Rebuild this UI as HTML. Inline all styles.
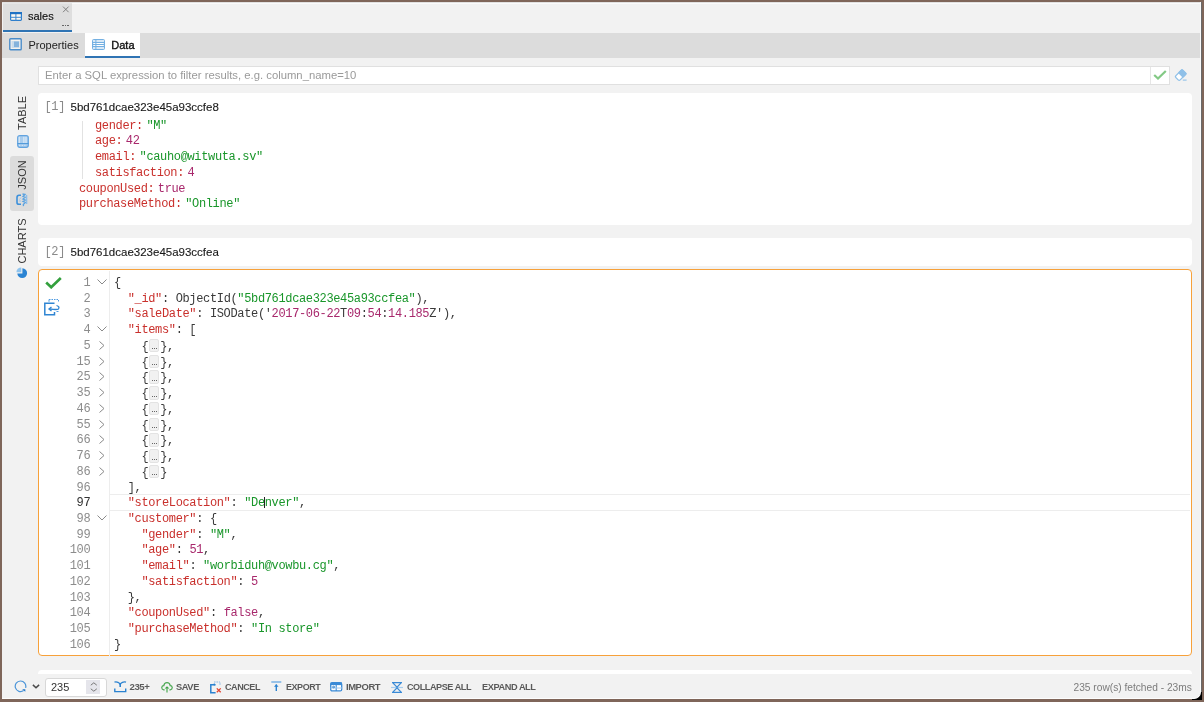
<!DOCTYPE html>
<html><head><meta charset="utf-8">
<style>
*{box-sizing:border-box;margin:0;padding:0}
html,body{width:1204px;height:702px;overflow:hidden;background:#7f665a}
body{position:relative;font-family:"Liberation Sans",sans-serif}
.root{position:absolute;left:0;top:0;width:1204px;height:702px;will-change:transform}
.a{position:absolute}
i,b{font-style:normal;font-weight:normal}
.win{position:absolute;left:2px;top:2px;width:1199px;height:697px;background:#f2f2f2}
.m{font-family:"Liberation Mono",monospace;font-size:12.0px;letter-spacing:-0.35px;line-height:15.74px;white-space:pre;color:#3a3a3a}
.t{white-space:pre;line-height:14px}
.k{color:#c9302c}
.s{color:#19962a}
.n{color:#a8286c}
.num{position:absolute;right:1113.7px;height:15.74px;line-height:15.74px;font-family:"Liberation Mono",monospace;font-size:12.0px;letter-spacing:-0.35px;color:#8c8c8c}
.num.act{color:#333}
.code{position:absolute;left:114.0px;height:15.74px;line-height:15.74px;font-family:"Liberation Mono",monospace;font-size:12.0px;letter-spacing:-0.35px;color:#3a3a3a;white-space:pre}
.fold{position:absolute;left:96px;width:12px;height:15.74px}
.cv{position:absolute;left:1px;top:3px}
.cr{position:absolute;left:3px;top:2px}
.fd{display:inline-block;width:9.5px;height:13.5px;margin:0 1.4px 0 1px;vertical-align:-2.5px;background:#f1f1f1;border:1px solid #e3e3e3;border-radius:2px;position:relative}
.fd b{position:absolute;left:2px;width:5px;bottom:2px;height:1px;border-top:1px dotted #666}
.g{display:inline-block;width:3.45px}
.cur{display:inline-block;width:0;height:11px;border-left:1px solid #222;vertical-align:-1.5px;margin-left:-0.5px;margin-right:-0.5px}
.actl{position:absolute;left:110px;width:1080px;height:17.54px;border-top:1px solid #ededed;border-bottom:1px solid #ededed}
.ui{font-size:11px;color:#222}
.btn{font-size:9.6px;color:#5a5a5a;font-weight:bold;letter-spacing:-0.45px}
</style></head><body><div class="root">
<div class="win"></div>
<div class="a" style="left:1192px;top:690px;width:9.8px;height:9.5px;background:#000"></div>
<div class="a" style="left:1150px;top:640px;width:51.2px;height:59.2px;background:#f2f2f2;border-right:1px solid #fdfdfd;border-bottom:1.2px solid #fdfdfd;border-bottom-right-radius:7px"></div>

<!-- top tab row -->
<div class="a" style="left:2px;top:2px;width:1199px;height:1px;background:#e2e2e2"></div><div class="a" style="left:72px;top:3px;width:1128px;height:1.2px;background:#fbfbfb"></div><div class="a" style="left:3px;top:3px;width:69px;height:27px;background:#dedede"></div><div class="a" style="left:3px;top:3px;width:69px;height:1px;background:#e6e6e6"></div>
<div class="a" style="left:3px;top:30px;width:69px;height:2px;background:#2f74b4"></div>
<svg class="a" style="left:10px;top:12px" width="12" height="9" viewBox="0 0 12 9"><rect x="0.6" y="0.6" width="10.8" height="7.8" rx="0.8" fill="#fdf8f0" stroke="#2f7fcc" stroke-width="1.2"/><rect x="0" y="0" width="12" height="2.2" fill="#1f72c4"/><line x1="5.9" y1="2" x2="5.9" y2="9" stroke="#3a86cf" stroke-width="1"/><line x1="0" y1="5.3" x2="12" y2="5.3" stroke="#3a86cf" stroke-width="1"/></svg>
<div class="a ui t" style="left:28px;top:9px;color:#111;-webkit-text-stroke:0.15px #111">sales</div>
<svg class="a" style="left:62px;top:6px" width="8" height="7" viewBox="0 0 8 7"><path d="M1 0.6 L6.6 6.2 M6.6 0.6 L1 6.2" stroke="#777" stroke-width="0.9"/></svg>
<div class="a" style="left:62px;top:25px;width:1.5px;height:1.2px;background:#666"></div><div class="a" style="left:64.7px;top:25px;width:1.5px;height:1.2px;background:#666"></div><div class="a" style="left:67.4px;top:25px;width:1.5px;height:1.2px;background:#666"></div>

<!-- second tab row -->
<div class="a" style="left:2px;top:33px;width:1199px;height:25px;background:#dcdcdc"></div>
<div class="a" style="left:85px;top:33px;width:55px;height:25px;background:#fff"></div>
<div class="a" style="left:85px;top:56px;width:55px;height:2px;background:#2f74b4"></div>
<svg class="a" style="left:9px;top:38px" width="13" height="13" viewBox="0 0 13 13"><rect x="0.8" y="0.8" width="11.4" height="11" rx="0.8" fill="#f6f3ee" stroke="#4a8cc9" stroke-width="1.4"/><rect x="2.5" y="3" width="8" height="7" fill="#c9dcec"/><rect x="5" y="3.5" width="5" height="5.5" fill="#85b3dc"/></svg>
<div class="a ui t" style="left:28.5px;top:38px">Properties</div>
<svg class="a" style="left:91.5px;top:39px" width="13" height="11" viewBox="0 0 13 11"><rect x="0.6" y="0.6" width="11.8" height="9.8" rx="1.5" fill="#fff" stroke="#74b0e2" stroke-width="1.2"/><rect x="1" y="1" width="11" height="2.4" fill="#d8e8f6"/><rect x="1" y="7.4" width="11" height="2.6" fill="#d8e8f6"/><line x1="0" y1="3.5" x2="13" y2="3.5" stroke="#74b0e2"/><line x1="0" y1="5.5" x2="13" y2="5.5" stroke="#74b0e2"/><line x1="0" y1="7.5" x2="13" y2="7.5" stroke="#74b0e2"/><line x1="3.9" y1="0" x2="3.9" y2="11" stroke="#74b0e2"/></svg>
<div class="a ui t" style="left:111.3px;top:38px;color:#111;-webkit-text-stroke:0.35px #111">Data</div>

<!-- filter -->
<div class="a" style="left:38px;top:66px;width:1132px;height:19px;background:#fff;border:1px solid #e0e0e0"></div>
<div class="a t" style="left:45px;top:68.3px;font-size:11.3px;color:#9a9a9a">Enter a SQL expression to filter results, e.g. column_name=10</div>
<div class="a" style="left:1150px;top:67px;width:1px;height:17px;background:#e6e6e6"></div>
<svg class="a" style="left:1153px;top:70px" width="14" height="10" viewBox="0 0 14 10"><path d="M1.2 5 L5 8.5 L12.8 1" fill="none" stroke="#83c985" stroke-width="2.2"/></svg>
<svg class="a" style="left:1174px;top:68.5px" width="14" height="13" viewBox="0 0 14 13"><g transform="rotate(-45 6.6 6.2)"><rect x="1.6" y="3.2" width="10" height="6" rx="1.4" fill="#fff" stroke="#8fc0e8" stroke-width="1.3"/><rect x="6.4" y="2.6" width="5.8" height="7.2" rx="1" fill="#8fc0e8"/></g><line x1="8.8" y1="11.1" x2="12.6" y2="11.1" stroke="#8fc0e8" stroke-width="1.1"/></svg>

<!-- left vertical tabs -->
<div class="a" style="left:10px;top:156px;width:24px;height:55px;background:#dcdcdc;border-radius:3px"></div>
<div class="a" style="left:22px;top:113px;width:0;height:0"><div style="position:absolute;left:-20px;top:-6px;width:40px;height:12px;transform:rotate(-90deg);font-size:11px;line-height:12px;color:#333;text-align:center">TABLE</div></div>
<div class="a" style="left:22px;top:175px;width:0;height:0"><div style="position:absolute;left:-20px;top:-6px;width:40px;height:12px;transform:rotate(-90deg);font-size:11px;line-height:12px;color:#333;text-align:center">JSON</div></div>
<div class="a" style="left:22px;top:241px;width:0;height:0"><div style="position:absolute;left:-25px;top:-6px;width:50px;height:12px;transform:rotate(-90deg);font-size:11px;line-height:12px;color:#333;text-align:center">CHARTS</div></div>
<svg class="a" style="left:16.5px;top:135px" width="12" height="13" viewBox="0 0 12 13"><rect x="0.7" y="0.7" width="10.6" height="11.6" rx="2" fill="#a9cdee" stroke="#62a3df" stroke-width="1.2"/><line x1="2.2" y1="1.8" x2="2.2" y2="8" stroke="#e6f0f9" stroke-width="1"/><line x1="6.9" y1="1.8" x2="6.9" y2="8" stroke="#e6f0f9" stroke-width="1"/><line x1="9" y1="1.8" x2="9" y2="8" stroke="#e6f0f9" stroke-width="1"/><line x1="0.5" y1="8.6" x2="11.5" y2="8.6" stroke="#4a95d8" stroke-width="1"/><line x1="2.2" y1="10.4" x2="9" y2="10.4" stroke="#e6f0f9" stroke-width="0.9" stroke-dasharray="1 1.6"/></svg>
<svg class="a" style="left:16px;top:193px" width="12" height="14" viewBox="0 0 12 14"><path d="M5 2.2 L3 2.2 Q1 2.2 1 4.5 L1 9.5 Q1 11.3 3 11.3 L5 11.3" fill="none" stroke="#3d90da" stroke-width="1.6"/><path d="M3.5 6.5 L5 4.5 M3 8 L5 8" stroke="#9cc7ee" stroke-width="1"/><path d="M6.5 1 L9 1.5 L7 3.5 L9.2 4.3 L7 6 L9.3 7 L7 8.5 L9.3 9.5 L7.3 11.5 L7.5 13.2" fill="none" stroke="#5aa2e0" stroke-width="1.3"/><line x1="10.6" y1="2" x2="10.6" y2="11" stroke="#8fbfea" stroke-width="1.4"/></svg>
<svg class="a" style="left:16px;top:267px" width="12" height="12" viewBox="0 0 12 12"><path d="M6.4 1.3 A4.9 4.9 0 1 1 1.3 6.4 L6.4 6.4 Z" fill="#2b84d3"/><path d="M5.3 0.4 A4.9 4.9 0 0 0 0.4 5.3 L5.3 5.3 Z" fill="#8fc4ee"/></svg>

<!-- panel 1 -->
<div class="a" style="left:38px;top:92.5px;width:1154px;height:132px;background:#fff;border-radius:4px"></div>
<div class="a m" style="left:44.5px;top:100px;color:#8a8a8a">[1]</div>
<div class="a ui t" style="left:70.5px;top:100px;font-size:11.5px;color:#1a1a1a;-webkit-text-stroke:0.12px #1a1a1a">5bd761dcae323e45a93ccfe8</div>
<div class="a" style="left:82px;top:121px;width:1px;height:57.5px;background:#e2e2e2"></div>
<div class="a m" style="left:95px;top:118.7px"><div><i class="k">gender:</i><i class="g"></i><i class="s">"M"</i></div><div><i class="k">age:</i><i class="g"></i><i class="n">42</i></div><div><i class="k">email:</i><i class="g"></i><i class="s">"cauho@witwuta.sv"</i></div><div><i class="k">satisfaction:</i><i class="g"></i><i class="n">4</i></div></div>
<div class="a m" style="left:79px;top:181.6px"><div><i class="k">couponUsed:</i><i class="g"></i><i class="n">true</i></div><div><i class="k">purchaseMethod:</i><i class="g"></i><i class="s">"Online"</i></div></div>

<!-- panel 2 header -->
<div class="a" style="left:38px;top:237.5px;width:1154px;height:28px;background:#fff;border-radius:4px"></div>
<div class="a m" style="left:44.5px;top:244.5px;color:#8a8a8a">[2]</div>
<div class="a ui t" style="left:70.5px;top:244.5px;font-size:11.5px;color:#1a1a1a;-webkit-text-stroke:0.12px #1a1a1a">5bd761dcae323e45a93ccfea</div>

<!-- editor -->
<div class="a" style="left:38px;top:269px;width:1154px;height:387.3px;background:#fff;border:1.8px solid #f7a13a;border-radius:4px"></div>
<div class="a" style="left:109px;top:270.5px;width:1px;height:385px;background:#ededed"></div>
<svg class="a" style="left:44.5px;top:277px" width="17" height="12" viewBox="0 0 17 12"><path d="M1.2 5.5 L6.2 10.3 L15.8 1" fill="none" stroke="#33a03d" stroke-width="2.6"/></svg>
<svg class="a" style="left:44px;top:299px" width="17" height="17" viewBox="0 0 17 17"><path d="M5 0.5 L14.5 0.5 L14.5 3" fill="none" stroke="#4f9be0" stroke-width="1" stroke-dasharray="1.5 1"/><path d="M5 0.5 L5 2.8" stroke="#4f9be0" stroke-width="1"/><path d="M10.5 4.2 L0.8 4.2 L0.8 15.8 L10.5 15.8 L10.5 13" fill="none" stroke="#2f85d3" stroke-width="1.5"/><path d="M12.5 6.5 Q16 7.5 14.5 10 Q13 11 6 10" fill="none" stroke="#2f85d3" stroke-width="1.3"/><path d="M7.5 8 L5 10 L7.5 12" fill="none" stroke="#2f85d3" stroke-width="1.3"/><path d="M12.5 12.5 L14.5 12.5" stroke="#4f9be0" stroke-width="1"/></svg>
<div class="num" style="top:275.90px">1</div><div class="fold" style="top:275.90px"><svg class="cv" width="10" height="6" viewBox="0 0 10 6"><path d="M0.5 0.5 L5 5 L9.5 0.5" fill="none" stroke="#8a8a8a" stroke-width="1"/></svg></div><div class="code" style="top:275.90px">{</div><div class="num" style="top:291.64px">2</div><div class="code" style="top:291.64px">  <i class="k">"_id"</i>: ObjectId(<i class="s">"5bd761dcae323e45a93ccfea"</i>),</div><div class="num" style="top:307.38px">3</div><div class="code" style="top:307.38px">  <i class="k">"saleDate"</i>: ISODate('<i class="n">2017-06-22</i>T<i class="n">09</i>:<i class="n">54</i>:<i class="n">14.185</i>Z'),</div><div class="num" style="top:323.12px">4</div><div class="fold" style="top:323.12px"><svg class="cv" width="10" height="6" viewBox="0 0 10 6"><path d="M0.5 0.5 L5 5 L9.5 0.5" fill="none" stroke="#8a8a8a" stroke-width="1"/></svg></div><div class="code" style="top:323.12px">  <i class="k">"items"</i>: [</div><div class="num" style="top:338.86px">5</div><div class="fold" style="top:338.86px"><svg class="cr" width="6" height="9" viewBox="0 0 6 9"><path d="M0.5 0.5 L5 4.5 L0.5 8.5" fill="none" stroke="#8a8a8a" stroke-width="1"/></svg></div><div class="code" style="top:338.86px">    {<i class="fd"><b></b></i>},</div><div class="num" style="top:354.60px">15</div><div class="fold" style="top:354.60px"><svg class="cr" width="6" height="9" viewBox="0 0 6 9"><path d="M0.5 0.5 L5 4.5 L0.5 8.5" fill="none" stroke="#8a8a8a" stroke-width="1"/></svg></div><div class="code" style="top:354.60px">    {<i class="fd"><b></b></i>},</div><div class="num" style="top:370.34px">25</div><div class="fold" style="top:370.34px"><svg class="cr" width="6" height="9" viewBox="0 0 6 9"><path d="M0.5 0.5 L5 4.5 L0.5 8.5" fill="none" stroke="#8a8a8a" stroke-width="1"/></svg></div><div class="code" style="top:370.34px">    {<i class="fd"><b></b></i>},</div><div class="num" style="top:386.08px">35</div><div class="fold" style="top:386.08px"><svg class="cr" width="6" height="9" viewBox="0 0 6 9"><path d="M0.5 0.5 L5 4.5 L0.5 8.5" fill="none" stroke="#8a8a8a" stroke-width="1"/></svg></div><div class="code" style="top:386.08px">    {<i class="fd"><b></b></i>},</div><div class="num" style="top:401.82px">46</div><div class="fold" style="top:401.82px"><svg class="cr" width="6" height="9" viewBox="0 0 6 9"><path d="M0.5 0.5 L5 4.5 L0.5 8.5" fill="none" stroke="#8a8a8a" stroke-width="1"/></svg></div><div class="code" style="top:401.82px">    {<i class="fd"><b></b></i>},</div><div class="num" style="top:417.56px">55</div><div class="fold" style="top:417.56px"><svg class="cr" width="6" height="9" viewBox="0 0 6 9"><path d="M0.5 0.5 L5 4.5 L0.5 8.5" fill="none" stroke="#8a8a8a" stroke-width="1"/></svg></div><div class="code" style="top:417.56px">    {<i class="fd"><b></b></i>},</div><div class="num" style="top:433.30px">66</div><div class="fold" style="top:433.30px"><svg class="cr" width="6" height="9" viewBox="0 0 6 9"><path d="M0.5 0.5 L5 4.5 L0.5 8.5" fill="none" stroke="#8a8a8a" stroke-width="1"/></svg></div><div class="code" style="top:433.30px">    {<i class="fd"><b></b></i>},</div><div class="num" style="top:449.04px">76</div><div class="fold" style="top:449.04px"><svg class="cr" width="6" height="9" viewBox="0 0 6 9"><path d="M0.5 0.5 L5 4.5 L0.5 8.5" fill="none" stroke="#8a8a8a" stroke-width="1"/></svg></div><div class="code" style="top:449.04px">    {<i class="fd"><b></b></i>},</div><div class="num" style="top:464.78px">86</div><div class="fold" style="top:464.78px"><svg class="cr" width="6" height="9" viewBox="0 0 6 9"><path d="M0.5 0.5 L5 4.5 L0.5 8.5" fill="none" stroke="#8a8a8a" stroke-width="1"/></svg></div><div class="code" style="top:464.78px">    {<i class="fd"><b></b></i>}</div><div class="num" style="top:480.52px">96</div><div class="code" style="top:480.52px">  ],</div><div class="actl" style="top:493.66px"></div><div class="num act" style="top:496.26px">97</div><div class="code" style="top:496.26px">  <i class="k">"storeLocation"</i>: <i class="s">"De</i><i class="cur"></i><i class="s">nver"</i>,</div><div class="num" style="top:512.00px">98</div><div class="fold" style="top:512.00px"><svg class="cv" width="10" height="6" viewBox="0 0 10 6"><path d="M0.5 0.5 L5 5 L9.5 0.5" fill="none" stroke="#8a8a8a" stroke-width="1"/></svg></div><div class="code" style="top:512.00px">  <i class="k">"customer"</i>: {</div><div class="num" style="top:527.74px">99</div><div class="code" style="top:527.74px">    <i class="k">"gender"</i>: <i class="s">"M"</i>,</div><div class="num" style="top:543.48px">100</div><div class="code" style="top:543.48px">    <i class="k">"age"</i>: <i class="n">51</i>,</div><div class="num" style="top:559.22px">101</div><div class="code" style="top:559.22px">    <i class="k">"email"</i>: <i class="s">"worbiduh@vowbu.cg"</i>,</div><div class="num" style="top:574.96px">102</div><div class="code" style="top:574.96px">    <i class="k">"satisfaction"</i>: <i class="n">5</i></div><div class="num" style="top:590.70px">103</div><div class="code" style="top:590.70px">  },</div><div class="num" style="top:606.44px">104</div><div class="code" style="top:606.44px">  <i class="k">"couponUsed"</i>: <i class="n">false</i>,</div><div class="num" style="top:622.18px">105</div><div class="code" style="top:622.18px">  <i class="k">"purchaseMethod"</i>: <i class="s">"In store"</i></div><div class="num" style="top:637.92px">106</div><div class="code" style="top:637.92px">}</div>

<!-- panel 3 edge -->
<div class="a" style="left:38px;top:669.5px;width:1154px;height:4.5px;background:#fff;border-radius:4px 4px 0 0"></div>

<!-- footer -->
<svg class="a" style="left:14px;top:680px" width="13" height="13" viewBox="0 0 13 13"><path d="M9.6 10.6 A5.3 5.3 0 1 1 11.6 7.8" fill="none" stroke="#4a94d8" stroke-width="1.2"/><path d="M8.2 9.2 L11.3 9.2 L11.3 11.8 Z" fill="#1f74c6"/></svg>
<svg class="a" style="left:32px;top:684px" width="8" height="5" viewBox="0 0 8 5"><path d="M0.9 0.9 L4 3.8 L7.1 0.9" fill="none" stroke="#4a4a4a" stroke-width="1.5"/></svg>
<div class="a" style="left:45px;top:677.5px;width:61.5px;height:19px;background:#fff;border:1px solid #d8d8d8;border-radius:3px"></div>
<div class="a t" style="left:51px;top:679.8px;font-size:11px;color:#333">235</div>
<div class="a" style="left:86.3px;top:679.7px;width:13.7px;height:14px;background:#e5e5eb"></div>
<svg class="a" style="left:89.5px;top:681.5px" width="8" height="10" viewBox="0 0 8 10"><path d="M0.8 3.2 L3.8 0.8 L6.8 3.2 M0.8 6.8 L3.8 9.2 L6.8 6.8" fill="none" stroke="#777" stroke-width="1"/></svg>
<svg class="a" style="left:113.5px;top:680.5px" width="13" height="12" viewBox="0 0 13 12"><path d="M0.8 7.5 L0.8 10.6 L11.7 10.6 L11.7 7.5" fill="none" stroke="#2a82d0" stroke-width="1.4"/><path d="M0.5 1.2 Q2 0.6 4 1.3 Q6 2.2 6.2 3.6 Q6.4 2.2 8.4 1.3 Q10.4 0.6 12 1.2" fill="none" stroke="#2a82d0" stroke-width="1.3"/><path d="M6.2 3 L6.2 6" stroke="#2a82d0" stroke-width="1.6"/></svg>
<div class="a btn t" style="left:129.5px;top:679.5px;transform-origin:0 0;transform:scaleX(1.0)">235+</div>
<svg class="a" style="left:160.5px;top:681.5px" width="12" height="11" viewBox="0 0 12 11"><path d="M3.6 7.8 L2.8 7.8 Q0.6 7.6 0.8 5.4 Q1 3.6 2.8 3.6 Q3.2 0.6 6 0.6 Q8.8 0.6 9.2 3.6 Q11 3.6 11.2 5.4 Q11.4 7.6 9.2 7.8 L8.4 7.8" fill="none" stroke="#4aa852" stroke-width="1.2"/><path d="M6 4.2 L8.3 6.6 L3.7 6.6 Z" fill="#3aa043"/><line x1="6" y1="6" x2="6" y2="10.5" stroke="#5ab060" stroke-width="1.3"/></svg>
<div class="a btn t" style="left:176px;top:679.5px;transform-origin:0 0;transform:scaleX(0.97)">SAVE</div>
<svg class="a" style="left:209.5px;top:680.5px" width="12" height="13" viewBox="0 0 12 13"><path d="M4 1 L10 1 L10 4.5" fill="none" stroke="#8cbbe6" stroke-width="1" stroke-dasharray="1.6 0.8"/><path d="M5.6 3.8 L0.8 3.8 L0.8 11.8 L5.6 11.8" fill="none" stroke="#2a82d0" stroke-width="1.5"/><path d="M4.3 2.5 L4.3 4.5" stroke="#2a82d0" stroke-width="1.2"/><path d="M6.8 7.4 L10.7 11.3 M10.7 7.4 L6.8 11.3" stroke="#e2432f" stroke-width="1.3"/></svg>
<div class="a btn t" style="left:224.5px;top:679.5px;transform-origin:0 0;transform:scaleX(0.94)">CANCEL</div>
<svg class="a" style="left:270.5px;top:681px" width="11" height="11" viewBox="0 0 11 11"><path d="M0.3 1 L10.3 1" stroke="#4f9be0" stroke-width="1.1"/><path d="M5.3 3.5 L5.3 10" stroke="#2a82d0" stroke-width="1.4"/><path d="M3 5.8 L5.3 3.2 L7.6 5.8 Z" fill="#2a82d0"/></svg>
<div class="a btn t" style="left:285.5px;top:679.5px;transform-origin:0 0;transform:scaleX(0.935)">EXPORT</div>
<svg class="a" style="left:330px;top:682px" width="13" height="10" viewBox="0 0 13 10"><rect x="0.7" y="0.7" width="11" height="8.2" rx="1.5" fill="#fff" stroke="#3a8ad6" stroke-width="1.3"/><rect x="0.5" y="0.5" width="11.5" height="2.6" fill="#3a8ad6"/><line x1="6.2" y1="3" x2="6.2" y2="9" stroke="#3a8ad6" stroke-width="1.1"/><line x1="0.5" y1="6" x2="12" y2="6" stroke="#9cc6ee" stroke-width="1"/><path d="M1.8 5 L4.5 5 M3.5 4 L4.6 5 L3.5 6" fill="none" stroke="#2a7bc4" stroke-width="1"/></svg>
<div class="a btn t" style="left:346.2px;top:679.5px;transform-origin:0 0;transform:scaleX(0.985)">IMPORT</div>
<svg class="a" style="left:391px;top:681.5px" width="12" height="11" viewBox="0 0 12 11"><path d="M1 0.7 L11 0.7 M1 10.3 L11 10.3" stroke="#3a8ad6" stroke-width="1.2"/><path d="M0 5.5 L12 5.5" stroke="#a6cdef" stroke-width="1.2"/><path d="M2 1 L6 5.2 L10 1 M2 10 L6 5.8 L10 10" fill="none" stroke="#3a8ad6" stroke-width="1.1"/></svg>
<div class="a btn t" style="left:407px;top:679.5px;transform-origin:0 0;transform:scaleX(0.945)">COLLAPSE ALL</div>
<div class="a btn t" style="left:482px;top:679.5px;transform-origin:0 0;transform:scaleX(0.96)">EXPAND ALL</div>
<div class="a t" style="left:1073.5px;top:680.8px;font-size:10.2px;color:#7c7c7c">235 row(s) fetched - 23ms</div>
<div class="a" style="left:2px;top:698px;width:1150px;height:1.2px;background:#fdfdfd"></div>
<div class="a" style="left:1200.2px;top:2px;width:1px;height:640px;background:#fafafa"></div>
<div class="a" style="left:1201.2px;top:2px;width:0.6px;height:690px;background:#6a6a6a"></div>
</div></body></html>
